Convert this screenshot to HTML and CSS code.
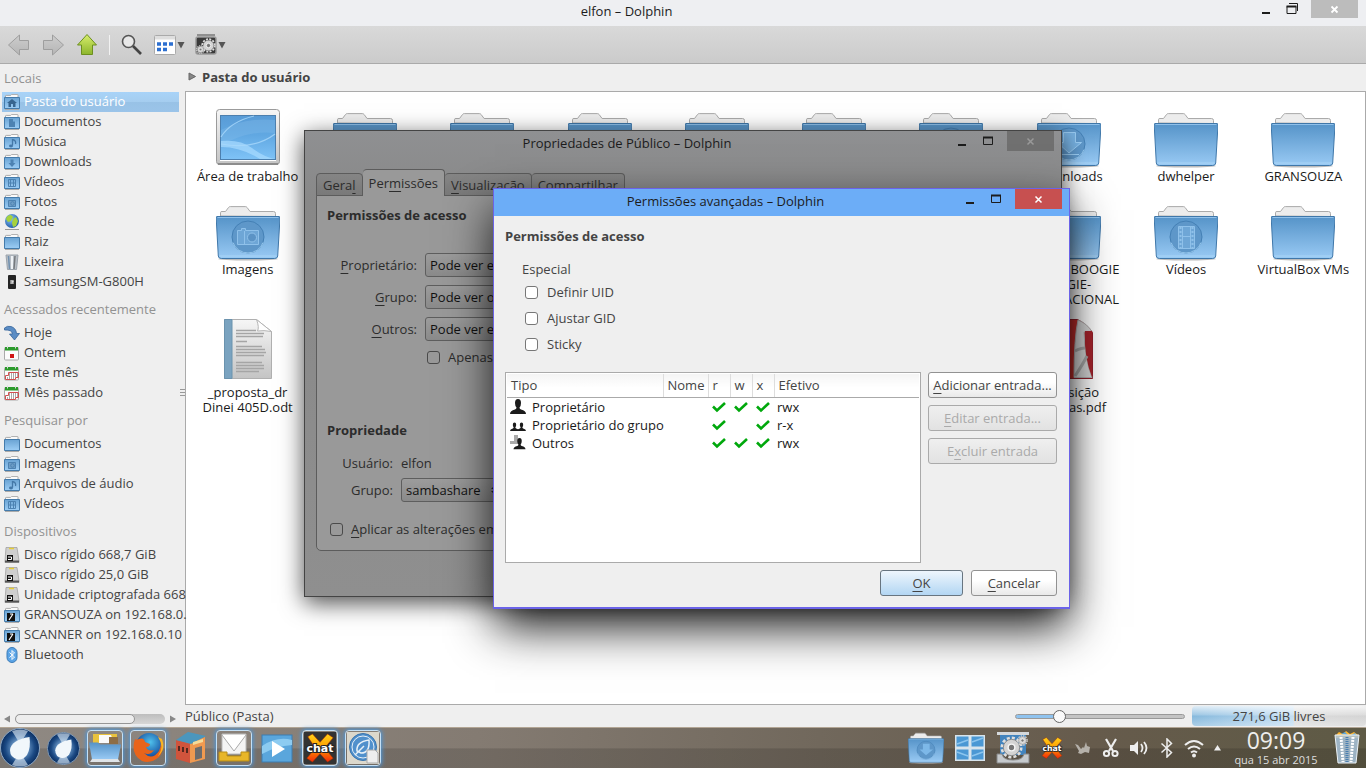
FILE: index.html
```html
<!DOCTYPE html>
<html lang="pt-BR">
<head>
<meta charset="utf-8">
<title>elfon – Dolphin</title>
<link rel="stylesheet" href="styles.css">
</head>
<body>
<svg class="defs" aria-hidden="true">
  <defs>
    <linearGradient id="gBlue" x1="0" y1="0" x2="0" y2="1"><stop offset="0" stop-color="#5593c8"/><stop offset="1" stop-color="#99caf4"/></linearGradient>
    <linearGradient id="gMini" x1="0" y1="0" x2="0" y2="1"><stop offset="0" stop-color="#6aa3d3"/><stop offset="1" stop-color="#9ccdf5"/></linearGradient>
    <linearGradient id="gGrey" x1="0" y1="0" x2="0" y2="1"><stop offset="0" stop-color="#f6f6f6"/><stop offset="1" stop-color="#c4c4c4"/></linearGradient>
    <linearGradient id="gArrow" x1="0" y1="0" x2="0" y2="1"><stop offset="0" stop-color="#cdcdcd"/><stop offset="1" stop-color="#b5b5b5"/></linearGradient>
    <linearGradient id="gGreen" x1="0" y1="0" x2="0" y2="1"><stop offset="0" stop-color="#d8ee6c"/><stop offset="1" stop-color="#8cb52c"/></linearGradient>
    <linearGradient id="gScreen" x1="0" y1="0" x2="0" y2="1"><stop offset="0" stop-color="#589bd6"/><stop offset=".45" stop-color="#61a8e2"/><stop offset="1" stop-color="#7fc3f7"/></linearGradient>
    <linearGradient id="gX" x1="0" y1="0" x2="0" y2="1"><stop offset="0" stop-color="#ffd21a"/><stop offset=".5" stop-color="#ff9a00"/><stop offset="1" stop-color="#f0280a"/></linearGradient>
    <radialGradient id="gOrb" cx=".5" cy=".5" r=".5"><stop offset="0" stop-color="#b5d0e9"/><stop offset=".45" stop-color="#5a87b8"/><stop offset=".75" stop-color="#1c4a84"/><stop offset="1" stop-color="#0b2e60"/></radialGradient>
    <radialGradient id="gGlobe" cx=".4" cy=".35" r=".7"><stop offset="0" stop-color="#8fc6f5"/><stop offset="1" stop-color="#1a58a6"/></radialGradient>
    <radialGradient id="gFox" cx=".55" cy=".35" r=".6"><stop offset="0" stop-color="#4fc1ec"/><stop offset="1" stop-color="#12469a"/></radialGradient>

    <symbol id="folder" viewBox="0 0 64 70">
      <ellipse cx="32" cy="66" rx="30" ry="1.500" fill="#bbb"/>
      <path d="M4.500 23V19.500q0-1 1.500-1h3.500l3-4q.6-.9 1.800-.9h15q1.200 0 1.800.9l3 4H57.500q2 0 2 2v3z" fill="#ececec" stroke="#aaa"/>
      <path d="M1 23.500h62q1 0 1 1.500l-2.300 38q-.2 2.500-3 2.500H5.300q-2.800 0-3-2.500L.2 25q-.2-1.500.8-1.500z" fill="url(#gBlue)" stroke="#3f77a9"/>
      <path d="M1.500 24.500h61" stroke="#8fc0ea"/><path d="M3.500 63h57" stroke="#b3dcfa" opacity=".7"/>
    </symbol>
    <symbol id="ring" viewBox="0 0 64 70"><circle cx="32" cy="44" r="16" fill="#5e97c9" stroke="#4480b5"/><path d="M17 49.500a16 16 0 0 0 30 0" fill="none" stroke="#a7d5f8" stroke-width=".8"/></symbol>
    <symbol id="desktop" viewBox="0 0 64 70">
      <rect x=".5" y="9.500" width="63" height="55" rx="3" fill="url(#gGrey)" stroke="#9b9b9b"/>
      <path d="M2 64h60" stroke="#8d8d8d" stroke-width="2"/>
      <rect x="4.500" y="15.500" width="55" height="44" fill="url(#gScreen)" stroke="#4c7fae"/>
      <path d="M5 30Q30 17 59 20V33Q30 30 5 46z" fill="#84bdec" opacity=".35"/>
      <path d="M5 41Q24 39 36 48T59 59H44Q25 47 5 47z" fill="#a9dcff" opacity=".7"/>
      <path d="M5 44Q38 50 59 34M5 37Q14 22 38 16" fill="none" stroke="#a9d8fb" stroke-width="1.200" opacity=".8"/>
      <path d="M4 60.500h56" stroke="#fff"/>
    </symbol>
    <symbol id="odt" viewBox="0 0 64 70">
      <path d="M8.500 3.500h32l15 12V62.500H8.500z" fill="url(#gGrey)" stroke="#b0b0b0"/>
      <path d="M8.500 3.500h7.500v59H8.500z" fill="#7aa3c0" stroke="#6b93ae"/>
      <path d="M40.500 3.500q3 8 1 11.500 6-1 14 .5z" fill="#fff" stroke="#b5b5b5"/>
      <path d="M20 14.500h20M20 17.500h28M20 20.500h27M20 25.500h11M20 30.500h26M20 33.500h29M20 36.500h30M20 39.500h28M20 46.500h26M20 49.500h28M20 52.500h28M20 55.500h23" stroke="#a5a5a5" stroke-width="1.600"/>
    </symbol>
    <symbol id="pdf" viewBox="0 0 64 70">
      <path d="M8.500 3.500h32q10 5 15 13V62.500H8.500z" fill="#c62f2c" stroke="#96202c"/>
      <path d="M41 4Q37 22 37 61.500h18Q48 45 47 16q4-1 8 0-4-8-14-12z" fill="#d9d9d9" stroke="#b5b5b5"/>
      <path d="M48 15q-1 26 7 46V15z" fill="#a8242c"/>
      <path d="M38 60q8-12 12-20M38 35q6-3 10-3" stroke="#aaa" stroke-width="3" fill="none"/>
    </symbol>

    <symbol id="mini" viewBox="0 0 16 16">
      <path d="M1.500 4V2q0-.6.700-.6h4.500l1-1h5.500q.8 0 .8.8V4z" fill="#fafafa" stroke="#aaa"/>
      <path d="M.5 3.500h15v11H.5z" fill="url(#gMini)" stroke="#447bab"/><path d="M1 15.500h14" stroke="#aaa"/>
    </symbol>
    <symbol id="tv" viewBox="0 0 16 16"><path d="M8 5l5 4h-1.500v4h-2.500v-3H7v3H4.500V9H3z" fill="#38658f"/></symbol>
    <symbol id="mdoc" viewBox="0 0 16 16"><path d="M5 5h4v2.500h2V13H5z" fill="#4d82b2"/></symbol>
    <symbol id="mnote" viewBox="0 0 16 16"><path d="M8.500 5v6.500M8.500 5.500q4 1 3 4.500" stroke="#4478a8" stroke-width="1.300" fill="none"/><ellipse cx="7" cy="12" rx="2" ry="1.400" fill="#4478a8"/></symbol>
    <symbol id="mdown" viewBox="0 0 16 16"><path d="M6.500 5.500h3V9h2L8 13 4.500 9h2z" fill="#4d82b2"/></symbol>
    <symbol id="mfilm" viewBox="0 0 16 16"><path d="M4.500 5.500h7v7h-7zM6.500 5.500v7M9.500 5.500v7M4.500 9h7" fill="none" stroke="#4d82b2"/></symbol>
    <symbol id="mcam" viewBox="0 0 16 16"><path d="M4.500 6.500h7v6h-7z" fill="#6e9ec7" stroke="#4d82b2"/><circle cx="8.500" cy="9.500" r="1.800" fill="none" stroke="#4d82b2"/></symbol>
    <symbol id="globe" viewBox="0 0 16 16"><circle cx="8" cy="7" r="7" fill="url(#gGlobe)"/><path d="M2 5q1-4 5-4l2 2-2 4-3 1zM9 5l3-2 2 4-2 5-3 1-1-4z" fill="#a6d23c"/><path d="M1 15.500h14" stroke="#999"/></symbol>
    <symbol id="bin" viewBox="0 0 16 16"><path d="M2 1h12l-1.500 14.500h-9z" fill="#b8bec5" stroke="#9ba3ab"/><path d="M4.500 2l1 13" stroke="#6f8fae" stroke-width="1.500"/><path d="M8 2v13" stroke="#eef2f5" stroke-width="2"/><path d="M11 2l-1 13" stroke="#75797d" stroke-width="1.500"/></symbol>
    <symbol id="phone" viewBox="0 0 16 16"><rect x="4" y="1" width="8" height="14" rx="1" fill="#242424"/><path d="M6 6h4v4H6z" fill="#8a8a8a"/><path d="M7 7h2v1H8v2" stroke="#fff" fill="none" stroke-width=".7"/></symbol>
    <symbol id="today" viewBox="0 0 16 16"><path d="M.5 3Q3 .5 7 1.500 12 3 12.500 8.500H15.500L10.500 15 5.500 9H8.500Q8 4.500 .5 5z" fill="#5a8cc4" stroke="#36649a" stroke-width=".8"/></symbol>
    <symbol id="cal" viewBox="0 0 16 16"><rect x=".5" y="2.500" width="14" height="12.500" rx="1" fill="#fcfcfc" stroke="#aaa"/><path d="M1 2h13v3.500H1z" fill="#2b9a2b"/><path d="M3.500 .5v3M11.500 .5v3" stroke="#ddd"/></symbol>
    <symbol id="calday" viewBox="0 0 16 16"><use href="#cal"/><rect x="6" y="9" width="4" height="4" fill="#d01515"/></symbol>
    <symbol id="calmon" viewBox="0 0 16 16"><use href="#cal"/><path d="M4.500 7.500h10v5h-3v2h-10v-4h3z" fill="#fff" stroke="#d05050"/><path d="M5 9h9M5 11h9M3 13h8" stroke="#555" stroke-dasharray="1 1"/></symbol>
    <symbol id="disk" viewBox="0 0 16 16"><path d="M2 .5h11l2 13v2H1v-2z" fill="#cfcfcf" stroke="#999" stroke-width=".7"/><path d="M1 13.500h14v2H1z" fill="#555"/><path d="M5 1.500h5" stroke="#e6cd38" stroke-width="1.500"/><rect x="3" y="8" width="6" height="6" fill="#111"/><path d="M4 10h3.500v2.500H4" stroke="#fff" fill="none"/></symbol>
    <symbol id="mshare" viewBox="0 0 16 16"><rect x="3" y="6" width="8" height="8" fill="#111"/><path d="M5 13l4-6M6 7h3" stroke="#fff" stroke-width="1.200"/></symbol>
    <symbol id="bt" viewBox="0 0 16 16"><rect x="3" y=".5" width="10" height="15" rx="5" fill="#5ba4e6" stroke="#3c7cb8"/><path d="M5.500 5.500l5 4.500L8 12.500v-9L10.500 6l-5 4.500" fill="none" stroke="#fff"/></symbol>
    <symbol id="user" viewBox="0 0 16 16"><path d="M5 4q0-4 3-4t3 4q0 3-1.500 4.500 0 1.500 1.500 2 5 1 5 4.500H0q0-3.500 5-4.500 1.500-.5 1.500-2Q5 7 5 4z" fill="#1b1b1b"/></symbol>
    <symbol id="tick" viewBox="0 0 14 12"><path d="M1 5.500L5 9.500 13 2" fill="none" stroke="#00a80c" stroke-width="2.600"/></symbol>
    <symbol id="gear" viewBox="0 0 24 24"><circle cx="12" cy="12" r="10" fill="none" stroke="#dedede" stroke-width="3" stroke-dasharray="3.140 2.096"/><circle cx="12" cy="12" r="8.500" fill="#d4d4d4" stroke="#8a8a8a"/><circle cx="12" cy="12" r="3.500" fill="#777" stroke="#f5f5f5" stroke-width="1.500"/></symbol>
    <symbol id="orb" viewBox="0 0 40 40"><circle cx="20" cy="20" r="19.500" fill="url(#gOrb)" stroke="#8fa9c4"/><path d="M12 3Q20 0 28 3L20 16zM12 37Q20 40 28 37L20 24z" fill="#e8f3fb" opacity=".6"/><path d="M29.500 9Q31 20 27 27 23 32 18 31.500 10 30 10 22 11 12 29.500 9z" fill="#f1f7fb"/></symbol>
    <symbol id="xchat" viewBox="0 0 34 34"><path d="M4 5l5-3 8 9 8-9 6 4-9 11 9 11-6 4-8-9-8 9-6-4 9-11z" fill="url(#gX)" stroke="#a02a00" stroke-width=".6"/></symbol>
  </defs>
</svg>

<main class="desktop">
<section class="window" aria-label="elfon – Dolphin">
  <header class="titlebar">
    <h1 class="title">elfon – Dolphin</h1>
    <div class="winbtns">
      <button class="wb" aria-label="Minimizar"><svg width="12" height="14"><path d="M2 11h8" stroke="#1c1c1c" stroke-width="2"/></svg></button>
      <button class="wb max" aria-label="Restaurar"><svg width="13" height="14"><path d="M1 4.500h9v7H1z" fill="none" stroke="#1c1c1c"/><path d="M.5 4.500h10" stroke="#1c1c1c" stroke-width="2"/><path d="M3 1.500h8.500V9" fill="none" stroke="#1c1c1c"/></svg></button>
      <button class="wb close idle" aria-label="Fechar"><svg width="9" height="9"><path d="M1.500 1.500l6 6m0-6l-6 6" stroke="#fff" stroke-width="1.800"/></svg></button>
    </div>
  </header>
  <nav class="toolbar">
    <button class="tool" aria-label="Voltar"><svg width="24" height="24"><path d="M1.500 12L12.500 2v5.500h9v9h-9V22z" fill="url(#gArrow)" stroke="#9e9e9e"/></svg></button>
    <button class="tool" aria-label="Avançar"><svg width="24" height="24"><path d="M22.500 12L11.500 2v5.500h-9v9h9V22z" fill="url(#gArrow)" stroke="#9e9e9e"/></svg></button>
    <button class="tool" aria-label="Acima"><svg width="24" height="24"><path d="M12 1.500L21.500 12H17.500v9.500h-11V12H2.500z" fill="url(#gGreen)" stroke="#6d8f1f"/></svg></button>
    <span class="sep"></span>
    <button class="tool" aria-label="Procurar"><svg width="24" height="24"><circle cx="8.500" cy="8.500" r="6" fill="#e8e8e8" stroke="#555" stroke-width="1.600"/><path d="M13 13l8 8" stroke="#444" stroke-width="2.600"/></svg></button>
    <button class="tool wide" aria-label="Modo de exibição"><svg width="22" height="22"><rect x=".5" y="1.500" width="21" height="19" rx="1" fill="#fff" stroke="#aaa"/><path d="M1 2h20v3.500H1z" fill="#dedede"/><path d="M3 10h4M9 10h4M15 10h4M3 15.500h4M9 15.500h4" stroke="#2c6fd0" stroke-width="3.600"/></svg><svg width="8" height="9"><path d="M.5 2h7L4 8.500z" fill="#555"/></svg></button>
    <button class="tool wide" aria-label="Controle"><svg width="22" height="22"><rect x="1" y="3" width="20" height="17" rx="2" fill="#3a3a3a" stroke="#999" stroke-width="1.500"/><path d="M2 1h18" stroke="#777" stroke-width="1.500"/><use href="#gear" x="6" y="4" width="15" height="15"/><use href="#gear" x="1" y="11" width="9" height="9"/></svg><svg width="8" height="9"><path d="M.5 2h7L4 8.500z" fill="#555"/></svg></button>
  </nav>
  <div class="body">
    <aside class="side">
      <div class="places">
        <h2 class="sh">Locais</h2>
        <a class="place on" href="#"><svg class="i16"><use href="#mini"/><use href="#tv"/></svg>Pasta do usuário</a>
        <a class="place" href="#"><svg class="i16"><use href="#mini"/><use href="#mdoc"/></svg>Documentos</a>
        <a class="place" href="#"><svg class="i16"><use href="#mini"/><use href="#mnote"/></svg>Música</a>
        <a class="place" href="#"><svg class="i16"><use href="#mini"/><use href="#mdown"/></svg>Downloads</a>
        <a class="place" href="#"><svg class="i16"><use href="#mini"/><use href="#mfilm"/></svg>Vídeos</a>
        <a class="place" href="#"><svg class="i16"><use href="#mini"/><use href="#mcam"/></svg>Fotos</a>
        <a class="place" href="#"><svg class="i16"><use href="#globe"/></svg>Rede</a>
        <a class="place" href="#"><svg class="i16"><use href="#mini"/></svg>Raiz</a>
        <a class="place" href="#"><svg class="i16"><use href="#bin"/></svg>Lixeira</a>
        <a class="place" href="#"><svg class="i16"><use href="#phone"/></svg>SamsungSM-G800H</a>
        <h2 class="sh">Acessados recentemente</h2>
        <a class="place" href="#"><svg class="i16"><use href="#today"/></svg>Hoje</a>
        <a class="place" href="#"><svg class="i16"><use href="#calday"/></svg>Ontem</a>
        <a class="place" href="#"><svg class="i16"><use href="#calmon"/></svg>Este mês</a>
        <a class="place" href="#"><svg class="i16"><use href="#calmon"/></svg>Mês passado</a>
        <h2 class="sh">Pesquisar por</h2>
        <a class="place" href="#"><svg class="i16"><use href="#mini"/></svg>Documentos</a>
        <a class="place" href="#"><svg class="i16"><use href="#mini"/><use href="#mcam"/></svg>Imagens</a>
        <a class="place" href="#"><svg class="i16"><use href="#mini"/><use href="#mnote"/></svg>Arquivos de áudio</a>
        <a class="place" href="#"><svg class="i16"><use href="#mini"/><use href="#mfilm"/></svg>Vídeos</a>
        <h2 class="sh">Dispositivos</h2>
        <a class="place" href="#"><svg class="i16"><use href="#disk"/></svg>Disco rígido 668,7 GiB</a>
        <a class="place" href="#"><svg class="i16"><use href="#disk"/></svg>Disco rígido 25,0 GiB</a>
        <a class="place" href="#"><svg class="i16"><use href="#disk"/></svg>Unidade criptografada 668</a>
        <a class="place" href="#"><svg class="i16"><use href="#mini"/><use href="#mshare"/></svg>GRANSOUZA on 192.168.0.</a>
        <a class="place" href="#"><svg class="i16"><use href="#mini"/><use href="#mshare"/></svg>SCANNER on 192.168.0.10</a>
        <a class="place" href="#"><svg class="i16"><use href="#bt"/></svg>Bluetooth</a>
      </div>
      <div class="hscroll">
        <svg width="6" height="8"><path d="M0 4l6-3.500v7z" fill="#888"/></svg>
        <div class="track"><div class="thumb"></div></div>
        <svg width="6" height="8"><path d="M6 4L0 .5v7z" fill="#888"/></svg>
      </div>
      <svg class="grip" width="5" height="8"><path d="M0 .5h5M0 3.500h5M0 6.500h5" stroke="#999"/></svg>
    </aside>
    <div class="content">
      <div class="crumb"><svg width="8" height="9"><path d="M1 1l6.500 3.500L1 8z" fill="#888" stroke="#666"/></svg><b>Pasta do usuário</b></div>
      <div class="view">
        <div class="file"><svg class="ic"><use href="#desktop"/></svg><span>Área de trabalho</span></div>
        <div class="file"><svg class="ic"><use href="#folder"/></svg></div>
        <div class="file"><svg class="ic"><use href="#folder"/></svg></div>
        <div class="file"><svg class="ic"><use href="#folder"/></svg></div>
        <div class="file"><svg class="ic"><use href="#folder"/></svg></div>
        <div class="file"><svg class="ic"><use href="#folder"/></svg></div>
        <div class="file"><svg class="ic"><use href="#folder"/><use href="#ring"/></svg></div>
        <div class="file"><svg class="ic" viewBox="0 0 64 70"><use href="#folder"/><use href="#ring"/><path d="M26.500 32.500h12v10h6L32 53 20.500 42.500h6zM22 54.500h20" fill="#76b0e0" stroke="#9accf3"/></svg><span>Downloads</span></div>
        <div class="file"><svg class="ic"><use href="#folder"/></svg><span>dwhelper</span></div>
        <div class="file"><svg class="ic"><use href="#folder"/></svg><span>GRANSOUZA</span></div>

        <div class="file"><svg class="ic" viewBox="0 0 64 70"><use href="#folder"/><use href="#ring"/><path d="M21.500 37.500h4v-2h4v2h13v14h-21zM28.500 38v13" fill="#6ea6d6" stroke="#8fc1ea"/><circle cx="36" cy="44.500" r="4.500" fill="#5b93c5" stroke="#8fc1ea"/></svg><span>Imagens</span></div>
        <div class="file skip"><svg class="ic"><use href="#folder"/></svg><span>BOOGIE BOOGIE<br>OOGIE-<br>INTERNACIONAL</span></div>
        <div class="file"><svg class="ic" viewBox="0 0 64 70"><use href="#folder"/><use href="#ring"/><path d="M24.500 33.500h16v22h-16zM28.500 33.500v22M36.500 33.500v22M28.500 43.500h8" fill="#6ea6d6" stroke="#8fc1ea"/><path d="M26.500 34v22M38.500 34v22" stroke="#8fc1ea" stroke-width="2" stroke-dasharray="2 2"/></svg><span>Vídeos</span></div>
        <div class="file"><svg class="ic"><use href="#folder"/></svg><span>VirtualBox VMs</span></div>

        <div class="file"><svg class="ic"><use href="#odt"/></svg><span>_proposta_dr<br>Dinei 405D.odt</span></div>
        <div class="file skip"><svg class="ic"><use href="#pdf"/></svg><span>Exposição<br>palavras.pdf</span></div>
      </div>
      <footer class="status">
        <span class="stext">Público (Pasta)</span>
        <input class="zoom" type="range" min="0" max="100" value="24" aria-label="Zoom">
        <div class="space">271,6 GiB livres</div>
      </footer>
    </div>
  </div>
</section>

<footer class="taskbar">
  <div class="launch">
    <svg width="40" height="40"><use href="#orb"/></svg>
    <svg width="33" height="33"><use href="#orb"/></svg>
    <span class="task"><svg width="32" height="32" viewBox="0 0 32 32"><path d="M4 2h24v9H4z" fill="#e9c23d"/><path d="M10 3h12l3 8H10z" fill="#fafafa"/><path d="M20 5h9v7h-9z" fill="#8d6d45"/><path d="M0 10.500h9l2 2h21l-3 15H3z" fill="url(#gBlue)"/><path d="M3 27h26l2 3H1z" fill="#dfe4e8"/></svg></span>
    <span class="task"><svg width="32" height="32" viewBox="0 0 32 32"><circle cx="17" cy="14" r="13" fill="url(#gFox)"/><path d="M3 7q2 1 4 0 5-2 6 3l5 2q0 3-4 3 2 5 8 3-4 6-10 3 8 8 15-2 3-6 1-12 6 9-1 18-8 7-17 4Q-2 22 3 7z" fill="#e8641b"/><path d="M26 5q7 10 0 19 8-6 4-17z" fill="#f9b522"/></svg></span>
    <span class="task bare"><svg width="32" height="32" viewBox="0 0 32 32"><path d="M1 8l14 3v20L1 27z" fill="#d0543c"/><path d="M15 11l15-6v22l-15 4z" fill="#f09a50"/><path d="M1 8L13 0l18 4-15 8z" fill="#4b96bd"/><path d="M20 16l7-2v12l-7 2z" fill="#6c6c6c"/><path d="M3 14h2v5H3zM7 15h2v5H7zM11 16h2v5h-2z" fill="#54281f"/><path d="M18 10l10-3v3l-10 3z" fill="#f4dc9a"/></svg></span>
    <span class="task"><svg width="32" height="32" viewBox="0 0 32 32"><path d="M4 2h24v20H4z" fill="#f4f4f4" stroke="#bbb"/><path d="M4 3l12 16L28 3" fill="#fff" stroke="#aaa"/><path d="M1 20h8v4h14v-4h8v9H1z" fill="#e8b629" stroke="#b98d16"/></svg></span>
    <span class="task bare"><svg width="32" height="32" viewBox="0 0 32 32"><rect x="1" y="3" width="30" height="27" fill="#5aa6dc" stroke="#3d7db0"/><path d="M1 14q15-10 30-6v5Q15 14 1 22z" fill="#8ccbf1"/><path d="M11 9l13 8-13 8z" fill="#fff"/></svg></span>
    <span class="task"><svg width="32" height="32" viewBox="0 0 32 32"><rect width="32" height="32" fill="#333"/><use href="#xchat" width="32" height="32"/><text class="chat" x="16" y="20">chat</text></svg></span>
    <span class="task"><svg width="32" height="32" viewBox="0 0 32 32"><rect width="32" height="32" fill="#dcd8cc"/><circle cx="16" cy="15" r="13.500" fill="#5090cc" stroke="#3a74ad"/><circle cx="16" cy="15" r="11" fill="none" stroke="#e6f0f8"/><path d="M10 19Q9 10 22 8q1 13-8 13zM8 23l9-9" fill="none" stroke="#e6f0f8" stroke-width="1.500"/><path d="M20 18h8l3 3v10H20z" fill="#eee" stroke="#aaa"/></svg></span>
  </div>
  <div class="tray">
    <svg width="36" height="36" viewBox="0 8 64 64"><use href="#folder" width="64" height="70"/><use href="#ring" width="64" height="70"/><path d="M26.500 32.500h12v10h6L32 53 20.500 42.500h6z" fill="#7db8e8"/></svg>
    <svg width="32" height="30"><path d="M1 2h30v26H1z" fill="#d8e4ec"/><path d="M2.500 3.500h12v10h-12zM17.500 3.500h12v10h-12zM2.500 16.500h12v10h-12zM17.500 16.500h12v10h-12z" fill="#4b98d4"/><path d="M3 11l11-4M18 9l11-4M3 19l11 4M18 23l11-4" stroke="#8cc5ee" stroke-width="1.500"/></svg>
    <svg width="34" height="34"><path d="M1 1h32v3H1z" fill="#d5d9dc"/><path d="M4 4h26v20H4z" fill="#4284be"/><use href="#gear" x="4" y="5" width="23" height="23"/><use href="#gear" x="21" y="4" width="11" height="11"/><path d="M1 23h5q1 6 11 6t11-6h5v9H1z" fill="#c6cacd" stroke="#888"/></svg>
    <svg width="24" height="24" viewBox="0 0 34 34"><use href="#xchat"/><text class="chat" x="17" y="21">chat</text></svg>
    <svg width="18" height="18"><path d="M1 5l3 1 3 4 2-2 1 1 2-6 1 4 3 1-1 6-4-1-4 2-3-1 1-2z" fill="#b5b1aa"/></svg>
    <svg width="18" height="20"><path d="M4 1l7 12M14 1L7 13" stroke="#eee" stroke-width="2.200"/><circle cx="4.500" cy="15.500" r="2.600" fill="none" stroke="#eee" stroke-width="2"/><circle cx="13" cy="15.500" r="2.600" fill="none" stroke="#eee" stroke-width="2"/></svg>
    <svg width="20" height="18"><path d="M0 6h4l4-4v14l-4-4H0z" fill="#eee"/><path d="M11 5q3 4 0 8M14 3q5 6 0 12" fill="none" stroke="#eee" stroke-width="1.800"/></svg>
    <svg width="14" height="20"><path d="M1.500 5.500l10 9L7 19V1l4.500 4.500-10 9" fill="none" stroke="#eee" stroke-width="1.500"/></svg>
    <svg width="20" height="20"><path d="M1 7q9-8 18 0M4 11q6-5 12 0M7 14.500q3-2.500 6 0" fill="none" stroke="#eee" stroke-width="2"/><circle cx="10" cy="17.500" r="2" fill="#eee"/></svg>
    <svg width="7" height="6"><path d="M0 5.500L3.500 0 7 5.500z" fill="#eee"/></svg>
    <div class="clock"><span class="time">09:09</span><span class="date">qua 15 abr 2015</span></div>
    <svg width="28" height="34" viewBox="0 0 28 34"><path d="M3 4l3-3 4 2 3-3 4 3 4-2 4 3v3H3z" fill="#ffb52e"/><path d="M8 3l4-2 3 3zM18 4l4-2 2 3z" fill="#5aa6dc"/><path d="M2 4h24l-3 28H5z" fill="#a9c4da" fill-opacity=".85" stroke="#eef4f8"/><path d="M8 6l2 25M20 6l-2 25" stroke="#fff" stroke-width="3" stroke-dasharray="2 1"/><path d="M14 6v25" stroke="#4b7fb0" stroke-width="3" stroke-dasharray="1 1"/></svg>
  </div>
</footer>

<section class="dialog props" aria-label="Propriedades de Público">
  <header class="titlebar">
    <h1 class="title">Propriedades de Público – Dolphin</h1>
    <div class="winbtns">
      <button class="wb" aria-label="Minimizar"><svg width="12" height="14"><path d="M2 11h8" stroke="#1c1c1c" stroke-width="2"/></svg></button>
      <button class="wb max" aria-label="Maximizar"><svg width="13" height="14"><path d="M1.500 3.500h9v7h-9z" fill="none" stroke="#1c1c1c"/><path d="M1 3.500h10" stroke="#1c1c1c" stroke-width="2"/></svg></button>
      <button class="wb close dim" aria-label="Fechar"><svg width="9" height="9"><path d="M1.500 1.500l6 6m0-6l-6 6" stroke="#999" stroke-width="1.500"/></svg></button>
    </div>
  </header>
  <div class="tabs">
    <button class="tab">Gera<u>l</u></button><button class="tab sel">Per<u>m</u>issões</button><button class="tab"><u>V</u>isualização</button><button class="tab">Compartilhar</button>
  </div>
  <div class="panel">
    <h3 class="h">Permissões de acesso</h3>
    <div class="form">
      <label for="p1"><u>P</u>roprietário:</label><select id="p1"><option>Pode ver e modificar o conteúdo</option></select>
      <label for="p2"><u>G</u>rupo:</label><select id="p2"><option>Pode ver o conteúdo</option></select>
      <label for="p3"><u>O</u>utros:</label><select id="p3"><option>Pode ver e modificar o conteúdo</option></select>
      <label class="ck second"><input type="checkbox">Apenas</label>
    </div>
    <h3 class="h own">Propriedade</h3>
    <div class="form owner">
      <span>Usuário:</span><span>elfon</span>
      <label for="p4">Grupo:</label><div class="combo"><select id="p4"><option>sambashare</option></select><svg width="6" height="10"><path d="M0 4l3-3 3 3zM0 6l3 3 3-3z" fill="#222"/></svg></div>
    </div>
    <label class="ck apply"><input type="checkbox"><span><u>A</u>plicar as alterações em</span></label>
  </div>
</section>

<section class="dialog adv" aria-label="Permissões avançadas">
  <header class="titlebar">
    <h1 class="title">Permissões avançadas – Dolphin</h1>
    <div class="winbtns">
      <button class="wb" aria-label="Minimizar"><svg width="12" height="14"><path d="M2 11h8" stroke="#1c1c1c" stroke-width="2"/></svg></button>
      <button class="wb max" aria-label="Maximizar"><svg width="13" height="14"><path d="M1.500 3.500h9v7h-9z" fill="none" stroke="#1c1c1c"/><path d="M1 3.500h10" stroke="#1c1c1c" stroke-width="2"/></svg></button>
      <button class="wb close" aria-label="Fechar"><svg width="9" height="9"><path d="M1.500 1.500l6 6m0-6l-6 6" stroke="#fff" stroke-width="1.500"/></svg></button>
    </div>
  </header>
  <div class="advbody">
    <h3 class="h">Permissões de acesso</h3>
    <fieldset class="special">
      <legend>Especial</legend>
      <label class="ck"><input type="checkbox">Definir UID</label>
      <label class="ck"><input type="checkbox">Ajustar GID</label>
      <label class="ck"><input type="checkbox">Sticky</label>
    </fieldset>
    <div class="acl">
      <div class="list">
        <table>
          <colgroup><col class="c1"><col class="c2"><col class="c3"><col class="c3"><col class="c3"><col></colgroup>
          <thead><tr><th>Tipo</th><th>Nome</th><th>r</th><th>w</th><th>x</th><th>Efetivo</th></tr></thead>
          <tbody>
            <tr><td><span class="who"><svg class="i16"><use href="#user"/></svg>Proprietário</span></td><td></td><td><svg class="tk"><use href="#tick"/></svg></td><td><svg class="tk"><use href="#tick"/></svg></td><td><svg class="tk"><use href="#tick"/></svg></td><td>rwx</td></tr>
            <tr><td><span class="who"><svg class="i16"><use href="#user" x="0" y="5" width="9" height="10"/><use href="#user" x="7" y="5" width="9" height="10"/></svg>Proprietário do grupo</span></td><td></td><td><svg class="tk"><use href="#tick"/></svg></td><td></td><td><svg class="tk"><use href="#tick"/></svg></td><td>r-x</td></tr>
            <tr><td><span class="who"><svg class="i16"><path d="M4 0h4v6h3v3H0V6h4z" fill="#aaa"/><use href="#user" x="3" y="3" width="13" height="12"/></svg>Outros</span></td><td></td><td><svg class="tk"><use href="#tick"/></svg></td><td><svg class="tk"><use href="#tick"/></svg></td><td><svg class="tk"><use href="#tick"/></svg></td><td>rwx</td></tr>
          </tbody>
        </table>
      </div>
      <div class="side-btns">
        <button class="btn"><u>A</u>dicionar entrada...</button>
        <button class="btn" disabled><u>E</u>ditar entrada...</button>
        <button class="btn" disabled>E<u>x</u>cluir entrada</button>
      </div>
    </div>
    <div class="actions">
      <button class="btn ok"><u>O</u>K</button>
      <button class="btn cancel"><u>C</u>ancelar</button>
    </div>
  </div>
</section>
</main>
</body>
</html>
```
FILE: styles.css
```css
* { box-sizing: border-box; }
body { margin: 0; font: 13px/20px "Open Sans", "Noto Sans", sans-serif; color: #444; overflow: hidden; }
button, select, input { font: inherit; color: inherit; margin: 0; }
button { padding: 0; border: 0; background: none; }
h1, h2, h3 { margin: 0; font-size: inherit; font-weight: 400; }
svg { display: block; flex: none; }
u { text-underline-offset: 3px; }
.defs { position: absolute; width: 0; height: 0; }
.desktop { position: relative; height: 100vh; display: flex; flex-direction: column; overflow: hidden; }
.window { flex: 1; min-height: 0; display: flex; flex-direction: column; background: #efefef; }

.titlebar { display: flex; height: 26px; flex: none; padding-right: 8px; background: #eeeff2; color: #1c1c1c; }
.title { flex: 1; text-align: center; line-height: 22px; }
.winbtns { display: flex; align-items: flex-start; }
.wb { width: 26px; height: 17px; display: flex; align-items: center; justify-content: center; }
.max { width: 27px; }
.close { width: 47px; height: 20px; margin-left: 5px; background: #c75050; }
.close.idle { height: 18px; background: #bcbcbc; }
.close.dim { background: #707070; }

.toolbar { display: flex; align-items: center; height: 38px; flex: none; padding: 0 7px; gap: 10px; background: linear-gradient(#d9d9d9, #cbcbcb); border-bottom: 1px solid #aaa; }
.tool { display: flex; align-items: center; }
.tool.wide { gap: 1px; }
.sep { width: 1px; height: 20px; background: #f2f2f2; }

.body { flex: 1; min-height: 0; display: flex; }
.side { position: relative; width: 185px; flex: none; display: flex; flex-direction: column; justify-content: space-between; }
.places { padding-left: 2px; }
.sh { padding: 7px 2px 4px; color: #929292; }
.sh:first-child { padding: 4px 2px; }
.place { display: flex; align-items: center; gap: 4px; height: 20px; padding: 0 0 1px 2px; line-height: 19px; color: #444; text-decoration: none; white-space: nowrap; }
.place.on { margin-right: 6px; color: #fff; background: linear-gradient(#a8d3f8, #a5cdef 50%, #98c2e6 50%, #9bc4e9); }
.i16 { width: 16px; height: 16px; }
.hscroll { display: flex; align-items: center; gap: 5px; height: 16px; padding: 0 9px 0 4px; }
.track { flex: 1; height: 10px; border-radius: 5px; background: linear-gradient(#bdbdbd, #d6d6d6); }
.thumb { width: 80%; height: 10px; border: 1px solid #969696; border-radius: 5px; background: #ededed; }
.grip { position: absolute; right: 0; top: 49%; }

.content { flex: 1; min-width: 0; display: flex; flex-direction: column; }
.crumb { display: flex; align-items: center; gap: 6px; height: 27px; padding: 0 0 2px 3px; }
.view { flex: 1; min-height: 0; display: grid; grid-template-columns: repeat(10, 1fr); align-content: start; row-gap: 9px; padding: 8px 3px; background: #fff; border: 1px solid #aaa; }
.file { display: flex; flex-direction: column; align-items: center; color: #1a1a1a; text-align: center; line-height: 15px; white-space: nowrap; }
.ic { width: 64px; height: 70px; margin-bottom: -1px; overflow: visible; }
.skip { grid-column: 8; }
.status { display: flex; align-items: center; height: 22px; flex: none; }
.stext { flex: 1; }
.zoom { appearance: none; width: 170px; height: 14px; margin-right: 7px; background: none; }
.zoom::-webkit-slider-runnable-track { height: 5px; border: 1px solid #999; border-radius: 3px; background: linear-gradient(90deg, #8fc3ef 27%, #c4c4c4 27%); }
.zoom::-webkit-slider-thumb { appearance: none; width: 13px; height: 13px; margin-top: -5px; border: 1px solid #666; border-radius: 50%; background: #fafafa; }
.space { width: 174px; height: 20px; text-align: center; border-radius: 4px; background: linear-gradient(rgba(255,255,255,.75), rgba(255,255,255,.2) 45%, rgba(255,255,255,0) 50%, rgba(255,255,255,.3)), linear-gradient(90deg, #86b9dd, #c2ddf2 58%, #dcdcdc 59%, #d4d4d4); }

.taskbar { height: 41px; flex: none; display: flex; align-items: center; justify-content: space-between; background: linear-gradient(rgba(0,0,0,0) 50%, rgba(0,0,0,.14) 52%), linear-gradient(90deg, #8f8983, #847b72 35%, #71685c 60%, #665b4c 80%, #5e5a45); border-top: 1px solid #b2a594; }
.launch { display: flex; align-items: center; gap: 7px; }
.task { width: 36px; height: 36px; padding: 1px; border: 1px solid #c4e0f6; border-radius: 4px; box-shadow: 0 0 4px 1px #4c97dc; }
.task.bare { border-color: transparent; box-shadow: none; }
.chat { font: bold 11px "DejaVu Sans", sans-serif; fill: #fff; text-anchor: middle; stroke: #222; stroke-width: 2px; paint-order: stroke; }
.tray { display: flex; align-items: center; gap: 10px; padding-right: 5px; }
.clock { display: flex; flex-direction: column; align-items: center; width: 80px; margin: 0 7px 2px 5px; color: #eee; }
.time { font-size: 23px; line-height: 24px; }
.date { font-size: 11px; line-height: 15px; white-space: nowrap; color: #ddd; }

.dialog { position: absolute; display: flex; flex-direction: column; }
.dialog .titlebar { height: 27px; padding-right: 7px; background: none; }
.dialog .title { line-height: 25px; }
.dialog .wb { height: 20px; }
.h { font-weight: 700; }
.ck { display: flex; align-items: center; gap: 9px; height: 26px; white-space: nowrap; }
.ck input { appearance: none; flex: none; width: 13px; height: 13px; border: 1px solid #777; border-radius: 3px; background: #fff; }

.props { left: 304px; top: 130px; width: 758px; height: 467px; overflow: hidden; isolation: isolate; border: 1px solid #444; background: linear-gradient(#8f9092, #888 70px, #8f8f8f); color: #2c2c2c; box-shadow: 0 6px 22px rgba(0,0,0,.7); }
.tabs { position: relative; z-index: 1; display: flex; align-items: flex-end; height: 38px; padding-left: 11px; flex: none; }
.tab { height: 23px; padding: 0 6px; border: 1px solid #5c5c5c; border-left-width: 0; border-radius: 4px 4px 0 0; background: linear-gradient(#858585, #797979); white-space: nowrap; }
.tab:first-child { border-left-width: 1px; }
.tab.sel { height: 27px; border-bottom: 0; background: #999; }
.panel { display: flex; flex-direction: column; align-items: flex-start; height: 356px; margin: -1px 11px 0; padding: 9px 10px; border: 1px solid #5c5c5c; border-radius: 0 0 5px 5px; background: #999; }
.form { display: grid; grid-template-columns: 90px 300px; column-gap: 8px; row-gap: 8px; align-items: center; margin-top: 28px; }
.form label, .form span { text-align: right; }
.form select { appearance: none; height: 24px; padding: 0 4px; border: 1px solid #5e5e5e; border-radius: 3px; background: linear-gradient(#9c9c9c, #8a8a8a); color: #111; width: 100%; }
.form .second { grid-column: 2; height: 16px; gap: 8px; padding-left: 2px; }
.props .ck input { background: none; border-color: #4a4a4a; }
.own { margin-top: 55px; }
.form.owner { grid-template-columns: 66px 100px; row-gap: 5px; margin-top: 13px; }
.owner span:nth-child(2) { text-align: left; }
.combo { position: relative; display: flex; align-items: center; }
.combo svg { position: absolute; right: 4px; }
.apply { margin: 15px 0 0 3px; gap: 8px; }

.adv { left: 493px; top: 188px; width: 577px; height: 421px; border: 1px solid #6b63e8; border-bottom-width: 2px; background: #efefef; box-shadow: 0 20px 44px -2px rgba(0,0,0,.9); }
.adv .titlebar { background: #6cadf7; }
.advbody { flex: 1; display: flex; flex-direction: column; padding: 10px 12px 11px 11px; }
.special { display: flex; flex-direction: column; margin: 13px 0 0 17px; padding: 0; border: 0; }
.special legend { padding: 0; }
.special .ck { padding-left: 3px; }
.acl { display: flex; gap: 7px; margin-top: 15px; }
.list { flex: 1; height: 191px; padding: 1px; border: 1px solid #aaa; background: #fff; }
table { width: 100%; table-layout: fixed; border-collapse: collapse; color: #1a1a1a; }
.c1 { width: 156px; } .c2 { width: 45px; } .c3 { width: 22px; }
th { height: 23px; padding: 0 4px; font-weight: 400; text-align: left; color: #444; border-bottom: 1px solid #aaa; border-left: 1px solid #ddd; background: linear-gradient(#f4f4f4, #fff 60%); }
th:first-child { border-left: 0; }
td { height: 18px; padding: 0 3px; line-height: 18px; white-space: nowrap; }
.who { display: flex; align-items: center; gap: 6px; }
.tk { width: 14px; height: 12px; margin-left: 1px; }
.side-btns { display: flex; flex-direction: column; gap: 7px; width: 129px; }
.btn { height: 26px; border: 1px solid #929292; border-radius: 3px; background: linear-gradient(#fff 40%, #e9e9e9); color: #444; white-space: nowrap; }
.btn:disabled { color: #aaa; border-color: #aaa; background: linear-gradient(#efefef, #e2e2e2); }
.actions { display: flex; justify-content: flex-end; gap: 8px; margin-top: 7px; }
.ok { width: 83px; border-color: #687580; background: linear-gradient(#eef6fd, #d0e6f8 50%, #b3d6f3); }
.cancel { width: 86px; }
```
